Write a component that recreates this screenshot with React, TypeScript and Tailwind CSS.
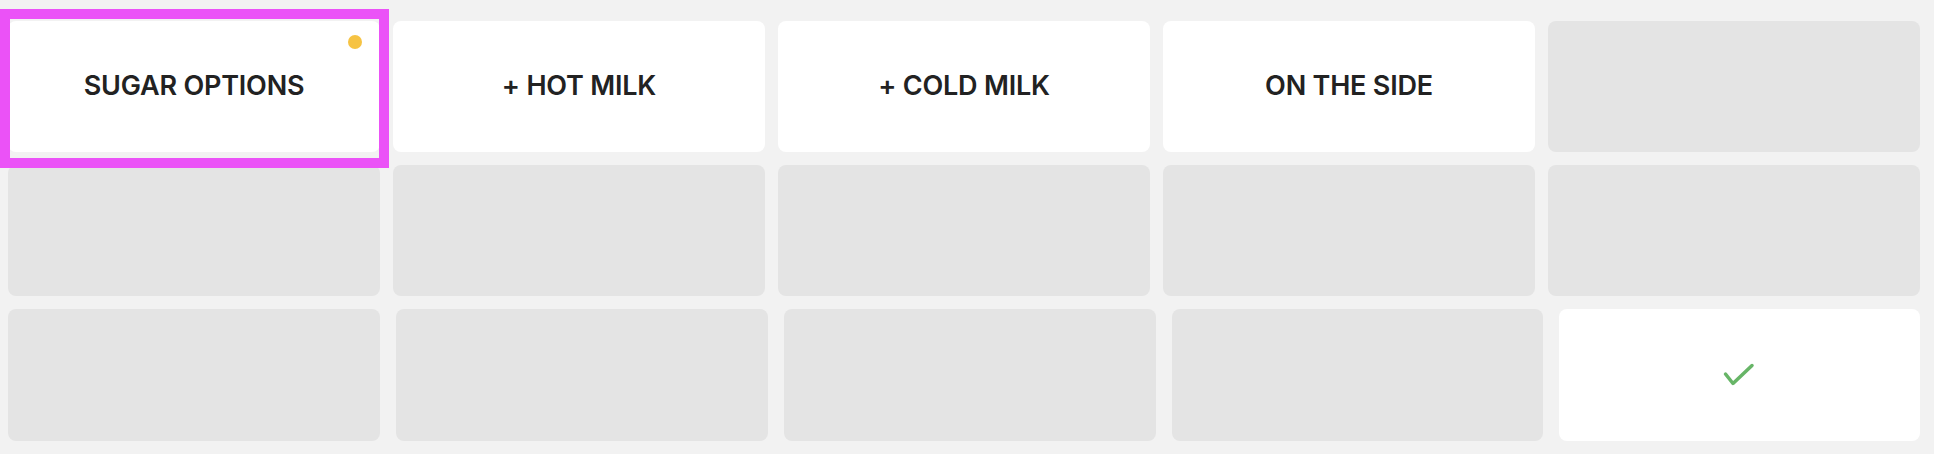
type Cell = { label?: string; active?: boolean; dot?: boolean; confirm?: boolean };

const rows: Cell[][] = [
  [
    { label: "SUGAR OPTIONS", active: true, dot: true },
    { label: "+ HOT MILK", active: true },
    { label: "+ COLD MILK", active: true },
    { label: "ON THE SIDE", active: true },
    {},
  ],
  [{}, {}, {}, {}, {}],
];

function Tile(props: { cell: Cell; className?: string }) {
  const { cell } = props;
  return (
    <div
      className={`relative flex shrink-0 items-center justify-center rounded-lg ${
        cell.active || cell.confirm ? "bg-white" : "bg-[#e4e4e4]"
      } ${props.className ?? ""}`}
    >
      {cell.label && (
        <span className="text-[27px] font-semibold tracking-[-0.2px] text-[#222]">{cell.label}</span>
      )}
      {cell.dot && <span className="absolute right-[18px] top-[14px] h-[14px] w-[14px] rounded-full bg-[#f6c343]" />}
      {cell.confirm && (
        <svg width="34" height="26" viewBox="0 0 34 26" fill="none" className="-ml-[1px]">
          <path d="M3.5 12 11 21.5 30 3.5" stroke="#67b567" strokeWidth={3.5} strokeLinecap="round" strokeLinejoin="round" />
        </svg>
      )}
    </div>
  );
}

export default function App() {
  return (
    <div className="relative h-[454px] w-full overflow-hidden bg-[#f2f2f2] pl-2 pt-[21px] font-['Inter',sans-serif]">
      <div className="flex flex-col gap-[13px]">
        {rows.map((row, i) => (
          <div key={i} className="flex gap-[13px]">
            {row.map((cell, j) => (
              <Tile key={j} cell={cell} className="h-[131px] w-[372px]" />
            ))}
          </div>
        ))}
        {/* bottom row sits on a slightly wider gap */}
        <div className="flex gap-4">
          <Tile cell={{}} className="h-[132px] w-[372px]" />
          <Tile cell={{}} className="h-[132px] w-[372px]" />
          <Tile cell={{}} className="h-[132px] w-[372px]" />
          <Tile cell={{}} className="h-[132px] w-[371px]" />
          <Tile cell={{ confirm: true }} className="h-[132px] w-[361px]" />
        </div>
      </div>
      {/* selection highlight */}
      <div className="pointer-events-none absolute left-0 top-[9px] h-[159px] w-[389px] border-[10px] border-[#eb52f7]" />
    </div>
  );
}
